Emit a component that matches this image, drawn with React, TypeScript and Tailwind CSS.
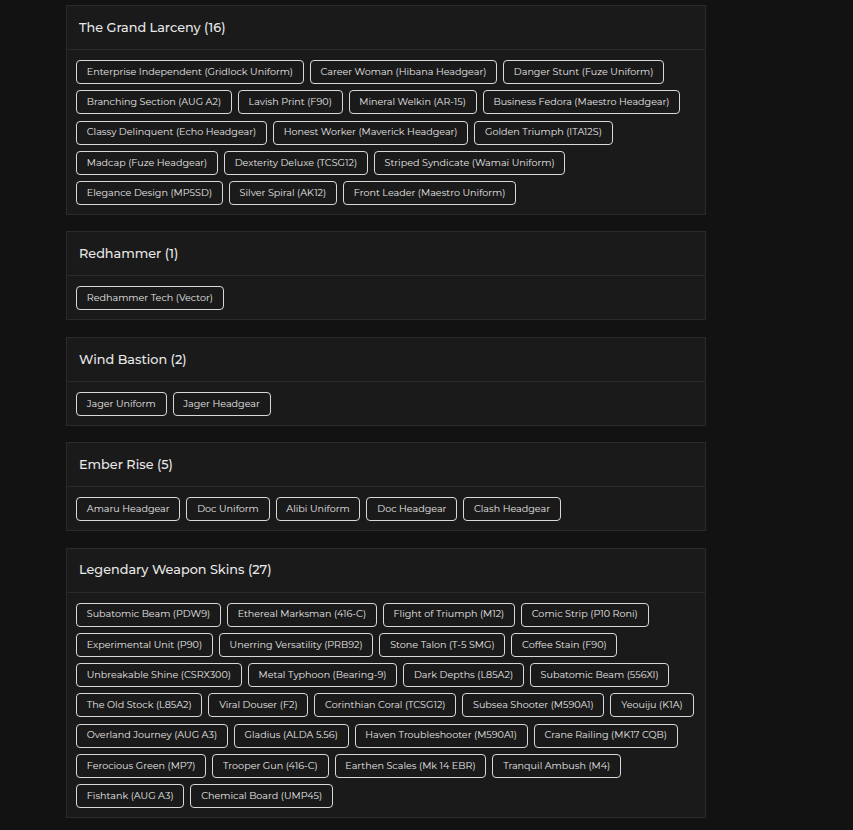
import React from "react";

type Section = { title: string; items: string[] };

const sections: Section[] = [
  {
    title: "The Grand Larceny (16)",
    items: [
      "Enterprise Independent (Gridlock Uniform)",
      "Career Woman (Hibana Headgear)",
      "Danger Stunt (Fuze Uniform)",
      "Branching Section (AUG A2)",
      "Lavish Print (F90)",
      "Mineral Welkin (AR-15)",
      "Business Fedora (Maestro Headgear)",
      "Classy Delinquent (Echo Headgear)",
      "Honest Worker (Maverick Headgear)",
      "Golden Triumph (ITA12S)",
      "Madcap (Fuze Headgear)",
      "Dexterity Deluxe (TCSG12)",
      "Striped Syndicate (Wamai Uniform)",
      "Elegance Design (MP5SD)",
      "Silver Spiral (AK12)",
      "Front Leader (Maestro Uniform)",
    ],
  },
  { title: "Redhammer (1)", items: ["Redhammer Tech (Vector)"] },
  { title: "Wind Bastion (2)", items: ["Jager Uniform", "Jager Headgear"] },
  {
    title: "Ember Rise (5)",
    items: ["Amaru Headgear", "Doc Uniform", "Alibi Uniform", "Doc Headgear", "Clash Headgear"],
  },
  {
    title: "Legendary Weapon Skins (27)",
    items: [
      "Subatomic Beam (PDW9)",
      "Ethereal Marksman (416-C)",
      "Flight of Triumph (M12)",
      "Comic Strip (P10 Roni)",
      "Experimental Unit (P90)",
      "Unerring Versatility (PRB92)",
      "Stone Talon (T-5 SMG)",
      "Coffee Stain (F90)",
      "Unbreakable Shine (CSRX300)",
      "Metal Typhoon (Bearing-9)",
      "Dark Depths (L85A2)",
      "Subatomic Beam (556XI)",
      "The Old Stock (L85A2)",
      "Viral Douser (F2)",
      "Corinthian Coral (TCSG12)",
      "Subsea Shooter (M590A1)",
      "Yeouiju (K1A)",
      "Overland Journey (AUG A3)",
      "Gladius (ALDA 5.56)",
      "Haven Troubleshooter (M590A1)",
      "Crane Railing (MK17 CQB)",
      "Ferocious Green (MP7)",
      "Trooper Gun (416-C)",
      "Earthen Scales (Mk 14 EBR)",
      "Tranquil Ambush (M4)",
      "Fishtank (AUG A3)",
      "Chemical Board (UMP45)",
    ],
  },
];

export default function App() {
  return (
    <div
      className="min-h-[830px] w-full bg-[#121212] pt-[5px] pl-[66px]"
      style={{ fontFamily: "Montserrat, Inter, 'Open Sans', sans-serif" }}
    >
      <div className="flex w-[640px] flex-col gap-[16.4px]">
        {sections.map((s) => (
          <div key={s.title} className="border border-[#2a2a2a] bg-[#1a1a1a]">
            <div className="flex h-[44px] items-center border-b border-[#2a2a2a] px-[12px] text-[12.8px] font-medium text-[#e8e8e8]">
              {s.title}
            </div>
            <div className="flex flex-wrap gap-x-[6px] gap-y-[6.25px] pl-[9px] pr-[8px] pt-[10px] pb-[9px]">
              {s.items.map((it, i) => (
                <span
                  key={i}
                  className="flex h-[24px] items-center rounded-[4px] border border-[#d8d8d8] px-[9.75px] text-[9.6px] text-[#e6e6e6]"
                >
                  {it}
                </span>
              ))}
            </div>
          </div>
        ))}
      </div>
    </div>
  );
}
